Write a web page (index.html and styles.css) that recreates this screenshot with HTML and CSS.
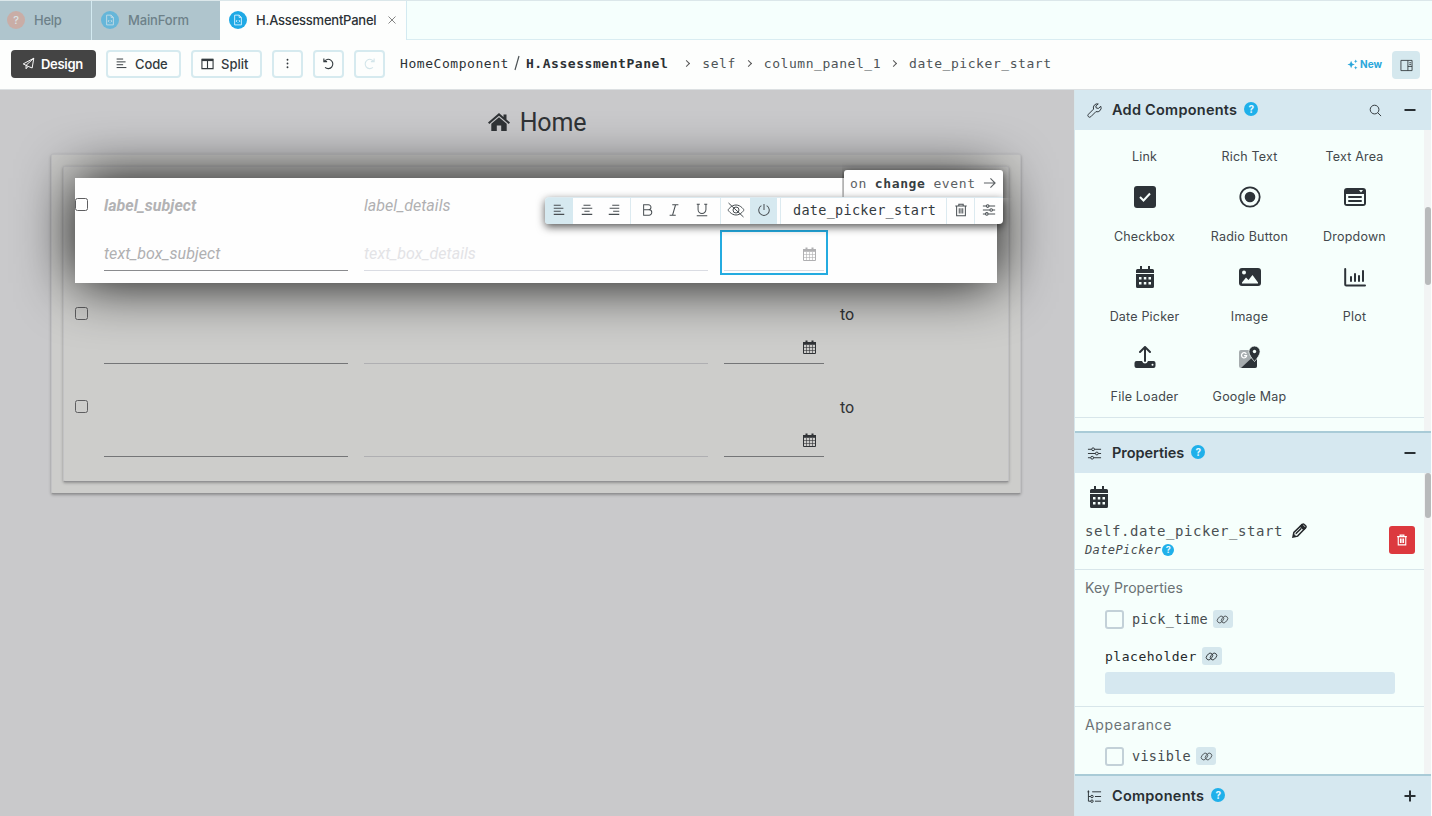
FILE: index.html
```html
<!DOCTYPE html>
<html lang="en">
<head>
<meta charset="utf-8">
<title>H.AssessmentPanel</title>
<link rel="stylesheet" href="styles.css">
</head>
<body>
<svg class="sprite" aria-hidden="true">
  <symbol id="file" viewBox="0 0 16 16"><path d="M3.500 1.500h6l3 3v10h-9zM9.500 1.500v3h3M7 8l-1.500 1.500L7 11M9 8l1.500 1.500L9 11"/></symbol>
  <symbol id="plane" viewBox="0 0 16 16"><path d="M1.500 8.500L14.500 1.500l-2 12-5-2zM14.500 1.500L5 10.300v4.200l2.500-3"/></symbol>
  <symbol id="left" viewBox="0 0 16 16"><path d="M2 2.500h8M2 6h11M2 9.500h8M2 13h12"/></symbol>
  <symbol id="center" viewBox="0 0 16 16"><path d="M4 2.500h8M2 6h12M5 9.500h6M2 13h12"/></symbol>
  <symbol id="right" viewBox="0 0 16 16"><path d="M6 2.500h8M3 6h11M7 9.500h7M2 13h12"/></symbol>
  <symbol id="sliders" viewBox="0 0 16 16"><path d="M1 3.500h4M8 3.500h7M1 8h8M12 8h3M1 12.500h3M7 12.500h8"/><circle cx="6.500" cy="3.500" r="1.500"/><circle cx="10.500" cy="8" r="1.500"/><circle cx="5.500" cy="12.500" r="1.500"/></symbol>
  <symbol id="trash" viewBox="0 0 16 16"><path d="M1.500 3.500h13M5.500 3.500v-2h5v2M3 3.500v11h10v-11M6 6v6M8 6v6M10 6v6"/></symbol>
  <symbol id="link" viewBox="0 0 16 16"><rect x="1" y="5" width="9" height="6" rx="3" transform="rotate(-50 5.500 8)"/><rect x="6" y="5" width="9" height="6" rx="3" transform="rotate(-50 10.500 8)"/></symbol>
  <symbol id="cal" viewBox="0 0 20 22"><path fill="currentColor" stroke="none" d="M5 0h2v3h6V0h2v3h2.500A1.500 1.500 0 0 1 19 4.500V7H1V4.500A1.500 1.500 0 0 1 2.500 3H5zM1 8h18v12.500a1.500 1.500 0 0 1-1.500 1.500h-15A1.500 1.500 0 0 1 1 20.500z"/><path class="cut" d="M4 11h2.500v2.500H4zM8.800 11h2.500v2.500H8.800zM13.500 11H16v2.500h-2.500zM4 16h2.500v2.500H4zM8.800 16h2.500v2.500H8.800zM13.500 16H16v2.500h-2.500z"/></symbol>
  <symbol id="gridcal" viewBox="0 0 13 14"><path d="M.5 3h12v10.500H.5z"/><path class="thin" d="M1 7.500h11M1 10.500h11M3.500 5v8.500M6.500 5v8.500M9.500 5v8.500"/><path fill="currentColor" stroke="none" d="M0 2h13v2.800H0z"/><path class="rings" d="M3.500.6v3M9.500.6v3"/></symbol>
</svg>

<div class="tabs">
  <div class="tab tab-help dim"><span class="badge orange">?</span><span class="t-help">Help</span></div>
  <div class="tab tab-main dim"><span class="badge"><svg><use href="#file"/></svg></span><span class="t-main">MainForm</span></div>
  <div class="tab tab-on"><span class="badge"><svg><use href="#file"/></svg></span><span class="t-on">H.AssessmentPanel</span><svg class="close" viewBox="0 0 8 8"><path d="M.5.5l7 7M7.500.5l-7 7"/></svg></div>
</div>

<div class="bar">
  <div class="btn design"><svg class="i13"><use href="#plane"/></svg>Design</div>
  <div class="btn code"><svg class="i13"><use href="#left"/></svg>Code</div>
  <div class="btn split"><svg class="i13" viewBox="0 0 14 14"><path d="M1 2.500h12v10H1zM7 2.500v10"/><path class="thick" d="M1 3.200h12"/></svg>Split</div>
  <div class="btn sq"><svg class="i13" viewBox="0 0 14 14"><path class="dots" d="M7 3v.01M7 7v.01M7 11v.01"/></svg></div>
  <div class="btn sq"><svg class="i13" viewBox="0 0 14 14"><path d="M2 1.500V5h3.500M2.300 5a5 5 0 1 1 1 6.200"/></svg></div>
  <div class="btn sq off"><svg class="i13" viewBox="0 0 14 14"><path d="M12 1.500V5H8.500M11.700 5a5 5 0 1 0-1 6.200"/></svg></div>
  <div class="crumbs mono"><span class="home">HomeComponent</span><svg class="slash" viewBox="0 0 6 16"><path d="M5 1L1 15"/></svg><b>H.AssessmentPanel</b><i></i><span>self</span><i></i><span>column_panel_1</span><i></i><span>date_picker_start</span></div>
  <div class="new"><svg viewBox="0 0 12 12"><path d="M4.500 2l1.200 2.800L8.500 6 5.700 7.200 4.500 10 3.300 7.200.5 6l2.800-1.200zM9.500.5l.6 1.400 1.400.6-1.400.6-.6 1.400-.6-1.400-1.400-.6 1.400-.6zM9.500 7.500l.6 1.400 1.400.6-1.400.6-.6 1.400-.6-1.400-1.400-.6 1.400-.6z"/></svg>New</div>
  <div class="dock"><svg class="i13" viewBox="0 0 14 14"><path d="M1 1.500h12v11H1zM8.500 1.500v11M10 4h2M10 6h2M8.500 8h4.500"/></svg></div>
</div>

<div class="body">
  <main class="canvas">
    <h1><svg viewBox="0 0 22 18"><path d="M11 0l4.500 3.900V1.500H18.500v5L22 9.600l-1.300 1.400L11 2.700 1.300 11 0 9.600zM11 4.200l7.700 6.500V18h-5.500v-5.500H8.800V18H3.300v-7.300z"/></svg>Home</h1>
    <section class="card outer"><div class="card inner">
      <div class="row first">
        <span class="cb"></span>
        <div class="cell dark"><b class="ph">label_subject</b><span class="field ph">text_box_subject</span></div>
        <div class="cell"><span class="ph">label_details</span><span class="field ph faint">text_box_details</span></div>
        <div class="cell"><span></span><span class="field"><svg class="gc"><use href="#gridcal"/></svg></span><span class="select"></span></div>
        <div class="cell"></div>
        <div class="event mono"><span>on</span><b>change</b><span>event</span><svg viewBox="0 0 14 14"><path d="M1 7h12M8 2l5 5-5 5"/></svg></div>
        <div class="tools">
          <span class="tool on"><svg><use href="#left"/></svg></span><span class="tool"><svg><use href="#center"/></svg></span><span class="tool t3"><svg><use href="#right"/></svg></span>
          <span class="tool line t4"><svg viewBox="0 0 16 16"><path d="M3 2h5.500a2.900 2.900 0 0 1 0 5.800H3zM3 7.800h6.200a3.100 3.100 0 0 1 0 6.200H3z"/></svg></span><span class="tool"><svg viewBox="0 0 16 16"><path d="M6 2h7M3 14h7M9.800 2L6.300 14"/></svg></span><span class="tool t6"><svg viewBox="0 0 16 16"><path d="M2 1.500h3.500M10.500 1.500H14M3.500 1.500v6a4.500 4.500 0 0 0 9 0v-6M2 14.500h12"/></svg></span>
          <span class="tool line t7"><svg class="eye" viewBox="0 0 18 16"><path d="M1 8s3-5 8-5 8 5 8 5-3 5-8 5-8-5-8-5zM1.500 1l15 14"/><circle cx="9" cy="8" r="3"/></svg></span><span class="tool on t8"><svg viewBox="0 0 16 16"><path d="M8 1v7M5 3a6 6 0 1 0 6 0"/></svg></span>
          <span class="name mono">date_picker_start</span>
          <span class="tool line t9"><svg><use href="#trash"/></svg></span><span class="tool line t10"><svg><use href="#sliders"/></svg></span>
        </div>
      </div>
      <div class="row">
        <span class="cb"></span>
        <div class="cell dark"><span></span><span class="field"></span></div>
        <div class="cell"><span></span><span class="field"></span></div>
        <div class="cell dark"><span></span><span class="field"><svg class="gc"><use href="#gridcal"/></svg></span></div>
        <div class="cell"><span>to</span></div>
      </div>
      <div class="row">
        <span class="cb"></span>
        <div class="cell dark"><span></span><span class="field"></span></div>
        <div class="cell"><span></span><span class="field"></span></div>
        <div class="cell dark"><span></span><span class="field"><svg class="gc"><use href="#gridcal"/></svg></span></div>
        <div class="cell"><span>to</span></div>
      </div>
    </div></section>
  </main>

  <aside class="side">
    <header class="head add"><svg class="hi" viewBox="0 0 16 16"><path d="M14.700 3.500l-2.600 2.300-2.300-.5-.4-2.200L12 1a4.200 4.200 0 0 0-5 5.500L1.500 12a1.800 1.800 0 0 0 2.600 2.600L9.500 9.200a4.200 4.200 0 0 0 5.200-5.700z"/></svg><span>Add Components</span><em>?</em><svg class="search" viewBox="0 0 14 14"><circle cx="6" cy="6" r="4.700"/><path d="M9.500 9.500L13 13"/></svg><svg class="sign" viewBox="0 0 12 12"><path d="M.5 6h11"/></svg></header>
    <div class="pane palette">
      <div class="items">
        <div class="item lone"><span>Link</span></div><div class="item lone"><span>Rich Text</span></div><div class="item lone"><span>Text Area</span></div>
        <div class="item"><svg viewBox="0 0 22 22"><rect width="22" height="22" rx="3"/><path class="w" d="M6 11l3.500 3.500L16 7.500"/></svg><span>Checkbox</span></div>
        <div class="item"><svg viewBox="0 0 22 22"><circle class="ring" cx="11" cy="11" r="9.700"/><circle cx="11" cy="11" r="5.300"/></svg><span>Radio Button</span></div>
        <div class="item"><svg viewBox="0 0 22 22"><rect y="2" width="22" height="18" rx="3"/><path class="hole" d="M2 8h18v10H2zM15 4h4l-2 2.500z"/><path class="bars" d="M5 11h12M5 15h12"/></svg><span>Dropdown</span></div>
        <div class="item"><svg><use href="#cal"/></svg><span>Date Picker</span></div>
        <div class="item"><svg viewBox="0 0 22 22"><rect y="2" width="22" height="18" rx="3"/><circle class="hole" cx="5" cy="6.500" r="2"/><path class="hole" d="M3 17.500v-1l4-5 2.500 2.500L13.500 9l5.500 7.500v1z"/></svg><span>Image</span></div>
        <div class="item"><svg viewBox="0 0 22 22"><path class="plot" d="M1.200 3v15.500q0 1 1 1H21"/><path class="plot" d="M7 11v4M11 8v7M15 10v5M19 5v10"/></svg><span>Plot</span></div>
        <div class="item"><svg viewBox="0 0 22 22"><path class="plot" d="M11 15V1.500M6 6l5-5 5 5"/><path d="M2.500 15H8q1 2.500 3 2.500t3-2.500h5.500q2 0 2 2v3q0 2-2 2h-17q-2 0-2-2v-3q0-2 2-2z"/><circle class="hole" cx="18.500" cy="18.700" r="1"/></svg><span>File Loader</span></div>
        <div class="item"><svg viewBox="0 0 22 22"><rect class="gray" x="0" y="4" width="18" height="18" rx="2"/><path d="M2 22L18 7v13q0 2-2 2z"/><path class="gg" d="M7 7.500a2.600 2.600 0 1 0 .7 2.200H5.500"/><path class="pin" d="M15.500 0a5.600 5.600 0 0 1 5.600 5.600c0 4-5.600 9.900-5.600 9.900S9.900 9.600 9.900 5.600A5.600 5.600 0 0 1 15.500 0z"/><circle class="hole" cx="15.500" cy="5.500" r="1.700"/></svg><span>Google Map</span></div>
      </div>
      <div class="gutter"><div class="thumb th1"></div></div>
    </div>
    <header class="head edge"><svg class="hi"><use href="#sliders"/></svg><span class="s-prop">Properties</span><em>?</em><svg class="sign" viewBox="0 0 12 12"><path d="M.5 6h11"/></svg></header>
    <div class="pane props">
      <div class="list">
        <div class="ident">
          <svg class="bigcal"><use href="#cal"/></svg>
          <div class="selfline mono">self.date_picker_start<svg viewBox="0 0 16 16"><path class="solid" d="M9 3.500L10.500 2l3.500 3.500L12.500 7z"/><path d="M1 15l1-5L11 1.500q1-1 2 0l1.500 1.500q1 1 0 2L6 14z"/><path class="edge2" d="M4 11.500l6-6M2.300 13.700l1.200-1.200"/></svg></div>
          <div class="type mono">DatePicker<em>?</em></div>
          <span class="del"><svg><use href="#trash"/></svg></span>
        </div>
        <div class="group">
          <h2 class="k">Key Properties</h2>
          <div class="prop mono"><span class="box"></span>pick_time<span class="lk"><svg><use href="#link"/></svg></span></div>
          <div class="prop mono strong">placeholder<span class="lk"><svg><use href="#link"/></svg></span></div>
          <div class="input"></div>
        </div>
        <div class="group last">
          <h2 class="a">Appearance</h2>
          <div class="prop mono"><span class="box"></span>visible<span class="lk"><svg><use href="#link"/></svg></span></div>
        </div>
      </div>
      <div class="gutter"><div class="thumb th2"></div></div>
    </div>
    <header class="head edge"><svg class="hi" viewBox="0 0 16 16"><path d="M5.500 3H15M8.500 8H15M8.500 13H15M1.500 1.500V13H4M1.500 8H4M.5 3h2"/><circle cx="5.300" cy="8" r="1.300"/><circle cx="5.300" cy="13" r="1.300"/></svg><span class="s-comp">Components</span><em>?</em><svg class="sign" viewBox="0 0 12 12"><path d="M.5 6h11M6 .5v11"/></svg></header>
  </aside>
</div>
</body>
</html>
```

FILE: styles.css
```css
* { box-sizing: border-box; }
body { margin: 0; width: 1432px; height: 816px; overflow: hidden; display: flex; flex-direction: column; background: #fdfefd; color: #2c3236; font-family: Inter, sans-serif; font-size: 13px; }
svg { display: block; width: 14px; height: 14px; flex: none; fill: none; stroke: currentColor; stroke-width: 1.2; }
.sprite { position: absolute; width: 0; height: 0; }
.mono { font-family: "DejaVu Sans Mono", monospace; white-space: pre; }
em { font-style: normal; display: inline-flex; align-items: center; justify-content: center; width: 14px; height: 14px; border-radius: 50%; background: #1fb0ea; color: #e6f7ff; font: 700 10px Inter, sans-serif; }

.tabs { height: 40px; display: flex; background: #f5fffd; border-top: 1px solid #dbe7ea; border-bottom: 1px solid #d9edf2; flex: none; }
.tab { display: flex; align-items: center; height: 39px; padding-bottom: 1px; font-weight: 500; border-right: 1px solid #d3eaf1; white-space: nowrap; }
.tab-help { width: 92px; padding-left: 7px; gap: 9px; letter-spacing: -.3px; }
.tab-main { width: 128px; padding-left: 9px; gap: 9px; border: 0; }
.dim { background: #afc5cd; color: #6d8189; }
.dim .badge { opacity: .5; }
.tab-on { width: 187px; padding-left: 9px; gap: 9px; background: #fdfefd; }
.badge { width: 18px; height: 18px; border-radius: 50%; background: #1fa9e5; color: #d9f3ff; display: flex; align-items: center; justify-content: center; font-size: 11px; flex: none; }
.badge svg { width: 12px; height: 12px; }
.orange { background: #e49680; color: #fff; }
.t-main { letter-spacing: -.15px; }
.t-on { letter-spacing: -.23px; }
.close { width: 8px; height: 8px; margin-left: 3px; stroke-width: .9; color: #777; }

.bar { height: 50px; flex: none; display: flex; align-items: center; padding: 0 12px 1px 11px; border-bottom: 1px solid #dce0e2; position: relative; }
.btn { height: 28px; display: flex; align-items: center; gap: 7px; border: 2px solid #d6eaef; border-radius: 4px; font-weight: 500; white-space: nowrap; color: #333a3e; padding-bottom: 1px; }
.i13 { width: 13px; height: 13px; }
.design { width: 85px; padding-left: 9px; background: #444; border-color: #444; color: #fff; font-weight: 600; margin-right: 10px; gap: 6px; letter-spacing: -.3px; }
.code { width: 75px; padding-left: 7px; margin-right: 10px; letter-spacing: -.1px; }
.split { width: 71px; padding-left: 8px; margin-right: 10px; }
.sq { width: 31px; justify-content: center; margin-right: 10px; }
.off { color: #d3e5ea; margin-right: 15px; }
.thick { stroke-width: 2.4; }
.dots { stroke-width: 2; stroke-linecap: round; }
.crumbs { display: flex; align-items: center; font-size: 13px; letter-spacing: .55px; height: 28px; padding-bottom: 2px; color: #4e5457; }
.crumbs .home, .crumbs b { color: #2c3135; }
.slash { width: 6px; height: 16px; margin: 0 6px 0 5px; }
.crumbs i { width: 5px; height: 5px; border: solid #555; border-width: 1px 1px 0 0; transform: rotate(45deg); margin: 0 13px 0 10px; }
.crumbs b + i { margin-left: 16px; }
.new { margin-left: auto; display: flex; align-items: center; gap: 2px; margin-right: 10px; color: #2ba7db; font-size: 10px; font-weight: 700; }
.new svg { width: 11px; height: 11px; fill: #2ba7db; stroke: none; }
.dock { width: 28px; height: 28px; border-radius: 4px; background: #d5e8ee; display: flex; align-items: center; justify-content: center; margin-top: 2px; }
.dock svg { stroke-width: .9; }

.body { height: 726px; display: flex; }
.canvas { width: 1074px; background: #c9c9cb; padding: 17px 53px 0 51px; font-family: Roboto, sans-serif; font-size: 16px; color: #303336; }
h1 { margin: 0 0 17px; height: 30px; display: flex; align-items: center; justify-content: center; gap: 10px; font-size: 25px; font-weight: 400; letter-spacing: -.15px; padding-left: 2px; }
h1 svg { width: 22px; height: 18px; fill: currentColor; stroke: none; }
.card { padding: 11px; border: 1px solid #c2c2c4; border-bottom-color: #929294; border-radius: 2px; background: #cdcdcb; box-shadow: 0 1px 3px rgba(0,0,0,.3); }
.outer { width: 970px; height: 340px; }
.inner { height: 316px; display: flex; flex-direction: column; gap: 12px; }
.row { display: grid; grid-template-columns: 13px 244px 344px 100px 1fr; column-gap: 16px; height: 81px; flex: none; position: relative; }
.cb { width: 13px; height: 13px; margin-top: 12px; border: 1px solid #5e5e60; border-radius: 2.5px; }
.first { height: 105px; padding-top: 8px; background: #fefefe; box-shadow: 0 0 56px rgba(0,0,0,.96); z-index: 1; }
.cell { display: grid; grid-template-rows: 39px 30px; position: relative; line-height: 39px; }
.first .cell { grid-template-rows: 39px 46px; }
.field { border-bottom: 1px solid #afafb2; display: flex; align-items: center; justify-content: flex-end; padding: 0 8px 3px 0; }
.first .field { justify-content: flex-start; padding: 12px 0 0; border-color: #dadce3; }
.dark .field, .first .dark .field { border-color: #747577; }
.first .dark .field { border-color: #8a8b8e; }
.ph { font-style: italic; color: #b0b0b2; letter-spacing: .04px; }
b.ph { color: #b2b2b4; }
.first .faint { color: #e3e3e6; }
.gc { width: 13px; height: 14px; stroke-width: 1; }
.thin { stroke-width: .8; stroke-opacity: .75; }
.rings { stroke-width: 2; }
.first .gc { margin-left: 79px; color: #b0b0b2; }
.select { position: absolute; left: -4px; top: 44px; width: 108px; height: 45px; border: 2px solid #24abe0; }
.event { position: absolute; left: 769px; top: -8px; width: 159px; height: 28px; display: flex; align-items: center; gap: 8px; padding: 0 0 2px 6px; background: #fefefe; border-radius: 3px 3px 0 0; box-shadow: 0 2px 9px rgba(0,0,0,.65); font-size: 13px; letter-spacing: .6px; color: #5c6164; z-index: 2; clip-path: inset(-8px -14px 0 -2px); }
.event b { color: #383e42; }
.event svg { width: 13px; margin-left: -1px; }
.tools { position: absolute; left: 470px; top: 19px; width: 458px; height: 27px; display: flex; align-items: center; background: #fefefe; border-radius: 4px 0 4px 4px; box-shadow: 0 3px 8px rgba(0,0,0,.65); border-top: 1px solid #dceaf0; z-index: 3; color: #484e52; }
.tool { width: 28px; height: 26px; display: flex; align-items: center; justify-content: center; padding-bottom: 2px; }
.tools svg { stroke-width: 1.15; }
.on { background: #d6e9f0; border-radius: 3px 0 0 3px; }
.line { border-left: 1px solid #dceaf0; }
.t3 { width: 29px; padding-right: 3px; }
.t4 { width: 31px; padding-left: 3px; }
.tool + .t4 + .tool { width: 26px; }
.t6 { width: 33px; padding-right: 3px; }
.t7 { width: 30px; }
.t8 { width: 27px; border-radius: 0; }
.tools .eye { width: 18px; height: 16px; stroke-width: 1; }
.name { margin-left: 3px; border-left: 1px solid #dceaf0; height: 26px; line-height: 24px; width: 166px; padding-left: 12px; font-size: 13.5px; letter-spacing: .29px; color: #343a3e; }
.t9 { width: 28px; }
.t10 { width: 29px; }

.side { width: 358px; display: flex; flex-direction: column; background: #f6fffc; border-left: 1px solid #d6e6eb; border-right: 1px solid #fdfefd; }
.head { height: 42px; flex: none; background: #d6e8f0; display: flex; align-items: center; padding: 0 15px 0 12px; font-size: 14.5px; letter-spacing: .25px; font-weight: 600; color: #292f33; white-space: nowrap; }
.add { height: 40px; }
.head > span { margin-top: -2px; }
.edge { border-top: 2px solid #a9cbd7; }
.hi { width: 15px; height: 15px; margin-right: 10px; stroke-width: 1; }
.head em { margin: -2px 0 0 7px; letter-spacing: 0; }
.head .s-prop { letter-spacing: -.05px; }
.search { width: 13px; height: 13px; margin-left: auto; margin-right: 22px; stroke-width: 1; }
.sign { width: 12px; height: 12px; stroke-width: 2; margin-left: auto; }
.search + .sign { margin-left: 0; }
.pane { height: 301px; flex: none; display: flex; overflow: hidden; }
.gutter { width: 7px; flex: none; background: #f2f4f4; margin-left: auto; }
.thumb { width: 6px; margin-left: 1px; border-radius: 3px; background: #b8babb; }
.th1 { height: 78px; margin-top: 77px; }
.th2 { height: 45px; margin-top: 0; }
.items { width: 349px; height: 288px; padding: 17px 17px 0; border-bottom: 1px solid #d8e6ea; display: grid; grid-template-columns: repeat(3, 105px); grid-template-rows: 20px repeat(3, 80px); text-align: center; line-height: 20px; font-size: 12.5px; letter-spacing: .2px; color: #43484c; }
.item { display: flex; flex-direction: column; align-items: center; justify-content: flex-end; gap: 19px; white-space: nowrap; }
.item svg { width: 22px; height: 22px; fill: #2d3338; stroke: none; color: #2d3338; }
.item .w, .w { fill: none; stroke: #f6fffc; stroke-width: 2; }
.ring, .bars, .plot, .gg { fill: none; stroke: #2d3338; stroke-width: 2; stroke-linecap: round; stroke-linejoin: round; }
.ring { stroke-width: 1.8; }
.hole, .cut { fill: #f6fffc; stroke: none; }
.gray { fill: #a6acae; }
.gg { stroke: #fff; stroke-width: 1.3; }
.pin { stroke: #f6fffc; stroke-width: .8; }
.list { width: 349px; }
.ident { height: 97px; border-bottom: 1px solid #d8e6ea; padding: 13px 0 0 10px; position: relative; }
.bigcal { width: 28px; height: 22px; }
.selfline { display: flex; align-items: center; height: 22px; margin-top: 12px; font-size: 14px; letter-spacing: .57px; color: #4a5053; }
.selfline svg { margin: -2px 0 0 9px; width: 15px; height: 15px; stroke-width: 1.6; color: #25292c; }
.selfline .edge2 { stroke-width: 1.6; }
.selfline .solid { fill: currentColor; }
.type { display: flex; align-items: center; height: 15px; font-size: 12px; font-style: italic; letter-spacing: .4px; color: #464b4f; }
.type em { width: 12px; height: 12px; font-size: 9px; margin-left: 1px; letter-spacing: 0; }
.del { position: absolute; right: 9px; top: 53px; width: 26px; height: 28px; border-radius: 3px; background: #dc393e; color: #fff; display: flex; align-items: center; justify-content: center; }
.del svg { width: 12px; height: 12px; stroke-width: 1.5; }
.group { height: 137px; border-bottom: 1px solid #d8e6ea; padding: 8px 0 0 10px; }
.last { border: 0; }
h2 { margin: 0 0 11px; height: 20px; line-height: 20px; font-size: 14px; font-weight: 400; color: #6b7275; }
.k { letter-spacing: .1px; }
.a { letter-spacing: .65px; }
.prop { display: flex; align-items: center; height: 20px; margin-left: 20px; font-size: 13.5px; letter-spacing: .3px; color: #454b4e; }
.strong { margin-top: 17px; font-size: 13px; letter-spacing: .52px; color: #24292c; }
.box { width: 19px; height: 19px; border: 2px solid #c3d1d8; border-radius: 3px; margin-right: 8px; }
.lk { width: 20px; height: 18px; margin-left: 5px; border-radius: 3px; background: #d5e7ed; display: flex; align-items: center; justify-content: center; }
.lk svg { width: 13px; height: 13px; stroke-width: 1; }
.input { margin: 6px 0 0 20px; width: 290px; height: 22px; border-radius: 3px; background: #d6e8f0; }
```
